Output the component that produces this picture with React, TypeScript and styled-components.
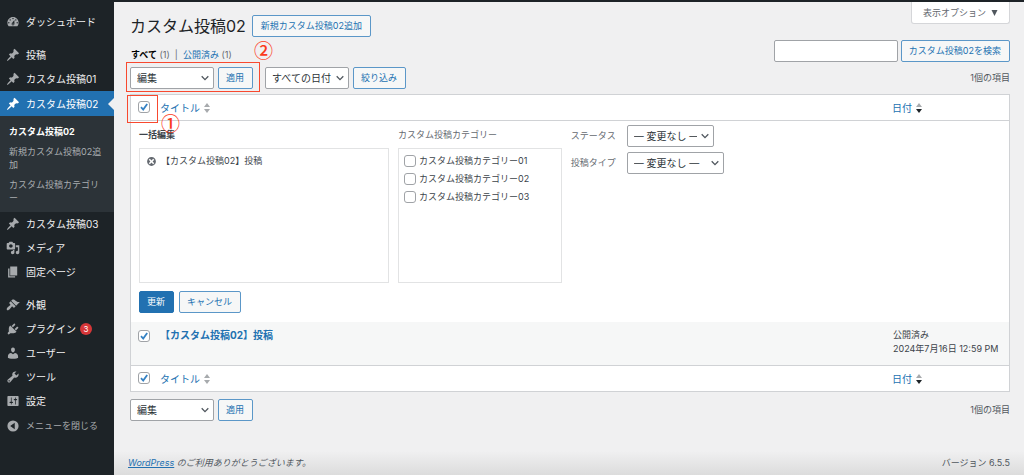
import React from 'react';
import styled, { createGlobalStyle, css } from 'styled-components';

const GlobalStyle = createGlobalStyle`
  *, *::before, *::after { box-sizing: border-box; }
  body {
    margin: 0;
    background: #f0f0f1;
    color: #3c434a;
    font: 9px/14px Inter, "Noto Sans CJK JP", sans-serif;
  }
  button, input, select { font: inherit; margin: 0; }
  a { color: #2271b1; text-decoration: none; }
`;

/* ---------- frame ---------- */

const Page = styled.div`
  display: flex;
  min-height: 100vh;
  border-top: 2px solid #1d2327;
`;

const Sidebar = styled.nav`
  flex: none;
  width: 114px;
  padding-top: 8px;
  background: #1d2327;
`;

const Main = styled.main`
  flex: 1;
  min-width: 0;
  display: flex;
  flex-direction: column;
  padding: 0 14px 5px 16px;
  background: linear-gradient(to top, #dcdcdc, #f0f0f1 24px);
`;

/* ---------- sidebar ---------- */

const MenuGroup = styled.ul`
  list-style: none;
  margin: 0 0 9px;
  padding: 0;
`;

const menuRow = css`
  position: relative;
  display: flex;
  align-items: center;
  gap: 6px;
  width: 100%;
  height: 24px;
  padding: 0 0 0 6px;
  border: 0;
  text-align: left;
`;

const MenuLink = styled.a<{ $active?: boolean }>`
  ${menuRow}
  font-size: 10px;
  color: ${p => (p.$active ? '#fff' : '#f0f0f1')};
  background: ${p => (p.$active ? '#2271b1' : 'transparent')};
  svg { fill: ${p => (p.$active ? '#fff' : '#a7aaad')}; }
  ${p => p.$active && css`
    height: 25px;
    &::after {
      content: '';
      position: absolute;
      right: 0;
      border: 6px solid transparent;
      border-right-color: #f0f0f1;
      border-left-width: 0;
    }
  `}
`;

const CollapseButton = styled.button`
  ${menuRow}
  height: 26px;
  font-size: 9px;
  color: #a7aaad;
  background: none;
  svg { fill: #a7aaad; }
`;

const SubMenu = styled.ul`
  list-style: none;
  margin: 0;
  padding: 6px 10px 4px 9px;
  background: #2c3338;
`;

const SubItem = styled.li`
  padding: 3px 0 4px;
  line-height: 13px;
`;

const SubLink = styled.a<{ $current?: boolean }>`
  color: ${p => (p.$current ? '#fff' : '#a9adb0')};
  font-weight: ${p => (p.$current ? 700 : 400)};
`;

const Badge = styled.span`
  width: 12px;
  height: 12px;
  margin-left: -2px;
  border-radius: 6px;
  background: #d63638;
  color: #fff;
  font-size: 8px;
  line-height: 12px;
  text-align: center;
`;

/* ---------- controls ---------- */

const Button = styled.button<{ $primary?: boolean }>`
  flex: none;
  height: 22px;
  padding: 0 8px 0 7px;
  border: 1px solid ${p => (p.$primary ? '#2271b1' : '#5b97c8')};
  border-radius: 2px;
  background: ${p => (p.$primary ? '#2271b1' : '#f6f7f7')};
  color: ${p => (p.$primary ? '#fff' : '#2271b1')};
  line-height: 14px;
  white-space: nowrap;
`;

const ButtonLink = styled.a`
  height: 22px;
  padding: 0 8px;
  border: 1px solid #5b97c8;
  border-radius: 2px;
  background: #f6f7f7;
  line-height: 20px;
  white-space: nowrap;
`;

const SelectBox = styled.span<{ $width: number }>`
  position: relative;
  flex: none;
  display: inline-flex;
  width: ${p => p.$width}px;
  svg {
    position: absolute;
    right: 5px;
    top: 7px;
    pointer-events: none;
  }
`;

const NativeSelect = styled.select`
  appearance: none;
  width: 100%;
  height: 22px;
  padding: 0 16px 0 6px;
  border: 1px solid #a0a3a7;
  border-radius: 2px;
  background: #fff;
  color: #2c3338;
  font-size: 10px;
`;

const SearchInput = styled.input`
  width: 124px;
  height: 22px;
  padding: 0 6px;
  border: 1px solid #a0a3a7;
  border-radius: 2px;
  background: #fff;
`;

const CheckBox = styled.span`
  position: relative;
  flex: none;
  display: inline-flex;
  vertical-align: top;
  svg {
    position: absolute;
    left: 0;
    top: 0;
    pointer-events: none;
    visibility: hidden;
  }
  input:checked + svg { visibility: visible; }
`;

const NativeCheck = styled.input`
  appearance: none;
  width: 12px;
  height: 12px;
  border: 1px solid #a0a3a7;
  border-radius: 3px;
  background: #fff;
`;

/* ---------- content ---------- */

const ScreenOptions = styled.button`
  align-self: flex-end;
  display: flex;
  align-items: center;
  gap: 5px;
  height: 22px;
  padding: 0 11px;
  border: 1px solid #d5d6d9;
  border-top: 0;
  border-radius: 0 0 3px 3px;
  background: #fff;
  color: #646970;
`;

const TitleRow = styled.header`
  display: flex;
  align-items: center;
  gap: 6px;
  margin-top: -9px;
`;

const Title = styled.h1`
  margin: 0;
  font-size: 16px;
  line-height: 22px;
  font-weight: 400;
  color: #1d2327;
`;

const FilterRow = styled.div`
  display: flex;
  justify-content: space-between;
  margin-top: 3px;
`;

const StatusLinks = styled.div`
  padding: 8px 0 0 1px;
  color: #646970;
  b { color: #000; }
`;

const SearchForm = styled.form`
  display: flex;
  gap: 3px;
`;

const TableNav = styled.div`
  display: flex;
  align-items: center;
  gap: 4px;
  margin: 5px 0;
  table + & { margin-top: 7px; }
`;

const BulkActions = styled.div`
  position: relative;
  display: flex;
  gap: 4px;
  margin-right: 8px;
`;

const ItemCount = styled.span`
  margin-left: auto;
  color: #50575e;
`;

const Marker = styled.span<{ $left: number; $top: number }>`
  position: absolute;
  z-index: 1;
  left: ${p => p.$left}px;
  top: ${p => p.$top}px;
  font-size: 19px;
  line-height: 20px;
  font-weight: 500;
  font-family: "Noto Sans CJK JP", sans-serif;
  color: #fb3a1c;
`;

const Outline = styled.span<{ $inset: string }>`
  position: absolute;
  z-index: 1;
  inset: ${p => p.$inset};
  border: 1px solid #f8492f;
  pointer-events: none;
`;

const Table = styled.table`
  width: 100%;
  border: 1px solid #d0d2d5;
  border-spacing: 0;
  background: #fff;
  th, td { padding: 0; text-align: left; vertical-align: top; font-weight: 400; }
  thead th { border-bottom: 1px solid #d0d2d5; }
  tfoot th { border-top: 1px solid #d0d2d5; }
  thead th, tfoot th { height: 26px; vertical-align: middle; font-size: 10px; }
`;

const CheckCell = styled.th`
  position: relative;
  width: 29px;
  && { padding-left: 7px; padding-top: 1px; }
`;

const DateHead = styled.th`
  width: 117px;
`;

const SortLink = styled.a`
  display: inline-flex;
  align-items: center;
  gap: 4px;
  vertical-align: top;
`;

const BulkPanel = styled.form`
  padding: 4px 8px 9px;
`;

const BulkColumns = styled.div`
  display: grid;
  grid-template-columns: 29% 19% 1fr;
  gap: 9px;
`;

const ColumnTitle = styled.div<{ $strong?: boolean }>`
  padding: 3px 0 6px;
  color: ${p => (p.$strong ? '#3c434a' : '#646970')};
  font-weight: ${p => (p.$strong ? 700 : 400)};
`;

const ListBox = styled.ul`
  list-style: none;
  display: flex;
  flex-direction: column;
  gap: 4px;
  height: 135px;
  margin: 0;
  padding: 5px;
  border: 1px solid #e2e3e4;
`;

const ListItem = styled.li`
  display: flex;
  align-items: center;
  gap: 4px;
  line-height: 14px;
  label { display: flex; align-items: center; gap: 3px; }
`;

const IconButton = styled.button`
  display: flex;
  padding: 0 0 0 1px;
  border: 0;
  background: none;
`;

const Field = styled.label`
  display: flex;
  align-items: center;
  height: 22px;
  margin-bottom: 5px;
  color: #646970;
`;

const FieldName = styled.span`
  width: 56px;
`;

const PanelActions = styled.div`
  display: flex;
  gap: 5px;
  margin-top: 8px;
`;

const PostRow = styled.tr`
  height: 43px;
  background: #f6f7f7;
  && td { padding-top: 6px; }
  && th { padding-top: 8px; }
`;

const PostTitle = styled.a`
  font-size: 10px;
  font-weight: 700;
`;

const PostDate = styled.td`
  && { padding-left: 1px; }
`;

const PageFooter = styled.footer`
  display: flex;
  justify-content: space-between;
  margin-top: auto;
  color: #50575e;
  line-height: 14px;
  em a { text-decoration: underline; }
`;

const FooterThanks = styled.em`
  margin-left: -2px;
`;

/* ---------- icons ---------- */

const PIN = 'M10.44 3.02l1.82-1.82 6.36 6.35-1.83 1.82c-1.05-.68-2.48-.57-3.41.36l-.75.75c-.92.93-1.04 2.35-.35 3.41l-1.83 1.82-2.41-2.41-2.8 2.79c-.42.42-3.38 2.71-3.8 2.29s1.86-3.39 2.28-3.81l2.79-2.79L4.1 9.36l1.83-1.82c1.05.69 2.48.57 3.4-.36l.75-.75c.93-.92 1.05-2.35.36-3.41z';
const DASHBOARD = 'M3.76 16h12.48c1.1-1.37 1.76-3.11 1.76-5 0-4.42-3.58-8-8-8s-8 3.58-8 8c0 1.89.66 3.63 1.76 5zM10 4c.55 0 1 .45 1 1s-.45 1-1 1-1-.45-1-1 .45-1 1-1zM6 6c.55 0 1 .45 1 1s-.45 1-1 1-1-.45-1-1 .45-1 1-1zm8 0c.55 0 1 .45 1 1s-.45 1-1 1-1-.45-1-1 .45-1 1-1zm-5.37 5.55L12 7v6c0 1.1-.9 2-2 2s-2-.9-2-2c0-.57.24-1.08.63-1.45zM4 10c.55 0 1 .45 1 1s-.45 1-1 1-1-.45-1-1 .45-1 1-1zm12 0c.55 0 1 .45 1 1s-.45 1-1 1-1-.45-1-1 .45-1 1-1zm-5 3c0-.55-.45-1-1-1s-1 .45-1 1 .45 1 1 1 1-.45 1-1z';
const MEDIA = 'M13 11V4c0-.55-.45-1-1-1h-1.67L9 1H5L3.67 3H2c-.55 0-1 .45-1 1v7c0 .55.45 1 1 1h10c.55 0 1-.45 1-1zM7 4.5c1.38 0 2.5 1.12 2.5 2.5S8.38 9.5 7 9.5 4.5 8.38 4.5 7 5.62 4.5 7 4.5zM14 6h5v10.5c0 1.38-1.12 2.5-2.5 2.5S14 17.88 14 16.5s1.12-2.5 2.5-2.5c.17 0 .34.02.5.05V9h-3V6zm-4 8.05V13h2v3.5c0 1.38-1.12 2.5-2.5 2.5S7 17.88 7 16.5 8.12 14 9.5 14c.17 0 .34.02.5.05z';
const PAGES = 'M6 15V2h10v13H6zm-1 1h8v2H3V5h2v11z';
const APPEARANCE = 'M14.48 11.06L7.41 3.99l1.5-1.5c.5-.56 2.3-.47 3.51.32 1.21.8 1.43 1.28 2.91 2.1 1.18.64 2.45 1.26 4.45.85zm-.71.71L6.7 4.7 4.93 6.47c-.39.39-.39 1.02 0 1.41l1.06 1.06c.39.39.39 1.03 0 1.42-.6.6-1.43 1.11-2.21 1.69-.35.26-.7.53-1.01.84C1.43 14.23.4 16.08 1.4 17.07c.99 1 2.84-.03 4.18-1.36.31-.31.58-.66.85-1.02.57-.78 1.08-1.61 1.69-2.21.39-.39 1.02-.39 1.41 0l1.06 1.06c.39.39 1.02.39 1.41 0z';
const PLUGINS = 'M13.11 4.36L9.87 7.6 8 5.73l3.24-3.24c.35-.34 1.05-.2 1.56.32.52.51.66 1.21.31 1.55zm-8 1.77l.91-1.12 9.01 9.01-1.19.84c-.71.71-2.63 1.16-3.82 1.16H6.14L4.9 17.26c-.59.59-1.54.59-2.12 0-.59-.58-.59-1.53 0-2.12l1.24-1.24v-3.88c0-1.13.4-3.19 1.09-3.89zm7.26 3.97l3.24-3.24c.34-.35 1.04-.21 1.55.31.52.51.66 1.21.31 1.55l-3.24 3.25z';
const USERS = 'M10 9.25c-2.27 0-2.73-3.44-2.73-3.44C7 4.02 7.82 2 9.97 2c2.16 0 2.98 2.02 2.71 3.81 0 0-.41 3.44-2.68 3.44zm0 2.57L12.72 10c2.39 0 4.52 2.33 4.52 4.53v2.49s-3.65 1.13-7.24 1.13c-3.65 0-7.24-1.13-7.24-1.13v-2.49c0-2.25 1.94-4.48 4.47-4.48z';
const TOOLS = 'M16.68 9.77c-1.34 1.34-3.3 1.67-4.95.99l-5.41 6.52c-.99.99-2.59.99-3.58 0s-.99-2.59 0-3.57l6.52-5.42c-.68-1.65-.35-3.61.99-4.95 1.28-1.28 3.12-1.62 4.72-1.06l-2.89 2.89 2.82 2.82 2.86-2.87c.53 1.58.18 3.39-1.08 4.65zM3.81 16.21c.4.39 1.04.39 1.43 0 .4-.4.4-1.04 0-1.43-.39-.4-1.03-.4-1.43 0-.39.39-.39 1.03 0 1.43z';
const SETTINGS = 'M18 16V4c0-.55-.45-1-1-1H3c-.55 0-1 .45-1 1v12c0 .55.45 1 1 1h14c.55 0 1-.45 1-1zM8 11h1c.55 0 1 .45 1 1s-.45 1-1 1H8v1.5c0 .28-.22.5-.5.5s-.5-.22-.5-.5V13H6c-.55 0-1-.45-1-1s.45-1 1-1h1V5.5c0-.28.22-.5.5-.5s.5.22.5.5V11zm5-2h-1c-.55 0-1-.45-1-1s.45-1 1-1h1V5.5c0-.28.22-.5.5-.5s.5.22.5.5V7h1c.55 0 1 .45 1 1s-.45 1-1 1h-1v5.5c0 .28-.22.5-.5.5s-.5-.22-.5-.5V9z';
const COLLAPSE = 'M10 2a8 8 0 1 0 0 16 8 8 0 0 0 0-16zM12.5 5.5v9L6 10z';
const DISMISS = 'M10 2c4.42 0 8 3.58 8 8s-3.58 8-8 8-8-3.58-8-8 3.58-8 8-8zm5 11l-3-3 3-3-2-2-3 3-3-3-2 2 3 3-3 3 2 2 3-3 3 3z';

const Icon = ({ d, size = 14, fill }: { d: string; size?: number; fill?: string }) => (
  <svg width={size} height={size} viewBox="0 0 20 20" fill={fill} fillRule="evenodd" aria-hidden="true">
    <path d={d} />
  </svg>
);

const SortArrows = ({ down }: { down?: boolean }) => (
  <svg width="6" height="12" viewBox="0 0 6 12" aria-hidden="true">
    <path d="M3 1l3 4H0z" fill="#a7aaad" />
    <path d="M3 11L0 7h6z" fill={down ? '#1d2327' : '#a7aaad'} />
  </svg>
);

/* ---------- small components ---------- */

const Select = ({ label, options, width }: { label?: string; options: string[]; width: number }) => (
  <SelectBox $width={width}>
    <NativeSelect aria-label={label}>
      {options.map(o => <option key={o}>{o}</option>)}
    </NativeSelect>
    <svg width="8" height="8" viewBox="0 0 8 8" fill="none" stroke="#50575e" strokeWidth="1.3" aria-hidden="true">
      <path d="M0.7 2.3L4 5.6l3.3-3.3" />
    </svg>
  </SelectBox>
);

const Check = ({ label, checked }: { label?: string; checked?: boolean }) => (
  <CheckBox>
    <NativeCheck type="checkbox" defaultChecked={checked} aria-label={label} />
    <svg width="12" height="12" viewBox="0 0 12 12" fill="none" stroke="#3582c4" strokeWidth="1.8" aria-hidden="true">
      <path d="M3 6.2l2.2 2.3L9.2 3" />
    </svg>
  </CheckBox>
);

const HeadCells = ({ marked }: { marked?: boolean }) => (
  <tr>
    <CheckCell scope="col">
      <Check label="すべて選択" checked />
      {marked && <Outline $inset="0 2px -3px -4px" aria-hidden="true" />}
      {marked && <Marker $left={30} $top={18}>①</Marker>}
    </CheckCell>
    <th scope="col"><SortLink href="#">タイトル<SortArrows /></SortLink></th>
    <DateHead scope="col"><SortLink href="#">日付<SortArrows down /></SortLink></DateHead>
  </tr>
);

const MenuItem = ({ icon, label, active, count, children }: {
  icon: string; label: string; active?: boolean; count?: number; children?: React.ReactNode;
}) => (
  <li>
    <MenuLink href="#" $active={active}>
      <Icon d={icon} />
      {label}
      {count && <Badge>{count}</Badge>}
    </MenuLink>
    {children}
  </li>
);

const categories = ['カスタム投稿カテゴリー01', 'カスタム投稿カテゴリー02', 'カスタム投稿カテゴリー03'];

export default function App() {
  return (
    <>
      <GlobalStyle />
      <Page>
        <Sidebar>
          <MenuGroup><MenuItem icon={DASHBOARD} label="ダッシュボード" /></MenuGroup>
          <MenuGroup>
            <MenuItem icon={PIN} label="投稿" />
            <MenuItem icon={PIN} label="カスタム投稿01" />
            <MenuItem icon={PIN} label="カスタム投稿02" active>
              <SubMenu>
                <SubItem><SubLink href="#" $current>カスタム投稿02</SubLink></SubItem>
                <SubItem><SubLink href="#">新規カスタム投稿02追加</SubLink></SubItem>
                <SubItem><SubLink href="#">カスタム投稿カテゴリー</SubLink></SubItem>
              </SubMenu>
            </MenuItem>
            <MenuItem icon={PIN} label="カスタム投稿03" />
            <MenuItem icon={MEDIA} label="メディア" />
            <MenuItem icon={PAGES} label="固定ページ" />
          </MenuGroup>
          <MenuGroup>
            <MenuItem icon={APPEARANCE} label="外観" />
            <MenuItem icon={PLUGINS} label="プラグイン" count={3} />
            <MenuItem icon={USERS} label="ユーザー" />
            <MenuItem icon={TOOLS} label="ツール" />
            <MenuItem icon={SETTINGS} label="設定" />
            <li><CollapseButton type="button"><Icon d={COLLAPSE} />メニューを閉じる</CollapseButton></li>
          </MenuGroup>
        </Sidebar>

        <Main>
          <ScreenOptions type="button">
            表示オプション
            <svg width="7" height="6" viewBox="0 0 7 6" fill="#50575e" aria-hidden="true"><path d="M0.5 0h6L3.5 6z" /></svg>
          </ScreenOptions>
          <TitleRow>
            <Title>カスタム投稿02</Title>
            <ButtonLink href="#">新規カスタム投稿02追加</ButtonLink>
          </TitleRow>
          <FilterRow>
            <StatusLinks><b>すべて</b> (1) &nbsp;|&nbsp; <a href="#">公開済み</a> (1)</StatusLinks>
            <SearchForm>
              <SearchInput type="search" aria-label="カスタム投稿02を検索" />
              <Button type="button">カスタム投稿02を検索</Button>
            </SearchForm>
          </FilterRow>
          <TableNav>
            <BulkActions>
              <Select label="一括操作" options={['編集']} width={84} />
              <Button type="button">適用</Button>
              <Outline $inset="-5px -7px -3px -4px" aria-hidden="true" />
              <Marker $left={124} $top={-27}>②</Marker>
            </BulkActions>
            <Select label="日付で絞り込む" options={['すべての日付']} width={84} />
            <Button type="button">絞り込み</Button>
            <ItemCount>1個の項目</ItemCount>
          </TableNav>

          <Table>
            <thead><HeadCells marked /></thead>
            <tbody>
              <tr>
                <td colSpan={3}>
                  <BulkPanel>
                    <BulkColumns>
                      <div>
                        <ColumnTitle $strong>一括編集</ColumnTitle>
                        <ListBox>
                          <ListItem>
                            <IconButton type="button" aria-label="削除"><Icon d={DISMISS} size={11} fill="#646970" /></IconButton>
                            【カスタム投稿02】投稿
                          </ListItem>
                        </ListBox>
                      </div>
                      <div>
                        <ColumnTitle>カスタム投稿カテゴリー</ColumnTitle>
                        <ListBox>
                          {categories.map(c => (
                            <ListItem key={c}><label><Check />{c}</label></ListItem>
                          ))}
                        </ListBox>
                      </div>
                      <div>
                        <Field><FieldName>ステータス</FieldName><Select options={['— 変更なし —']} width={87} /></Field>
                        <Field><FieldName>投稿タイプ</FieldName><Select options={['— 変更なし —']} width={97} /></Field>
                      </div>
                    </BulkColumns>
                    <PanelActions>
                      <Button type="button" $primary>更新</Button>
                      <Button type="button">キャンセル</Button>
                    </PanelActions>
                  </BulkPanel>
                </td>
              </tr>
              <PostRow>
                <CheckCell scope="row"><Check label="【カスタム投稿02】投稿を選択" checked /></CheckCell>
                <td><PostTitle href="#">【カスタム投稿02】投稿</PostTitle></td>
                <PostDate>公開済み<br />2024年7月16日 12:59 PM</PostDate>
              </PostRow>
            </tbody>
            <tfoot><HeadCells /></tfoot>
          </Table>

          <TableNav>
            <BulkActions>
              <Select label="一括操作" options={['編集']} width={84} />
              <Button type="button">適用</Button>
            </BulkActions>
            <ItemCount>1個の項目</ItemCount>
          </TableNav>

          <PageFooter>
            <FooterThanks><a href="#">WordPress</a> のご利用ありがとうございます。</FooterThanks>
            <span>バージョン 6.5.5</span>
          </PageFooter>
        </Main>
      </Page>
    </>
  );
}
